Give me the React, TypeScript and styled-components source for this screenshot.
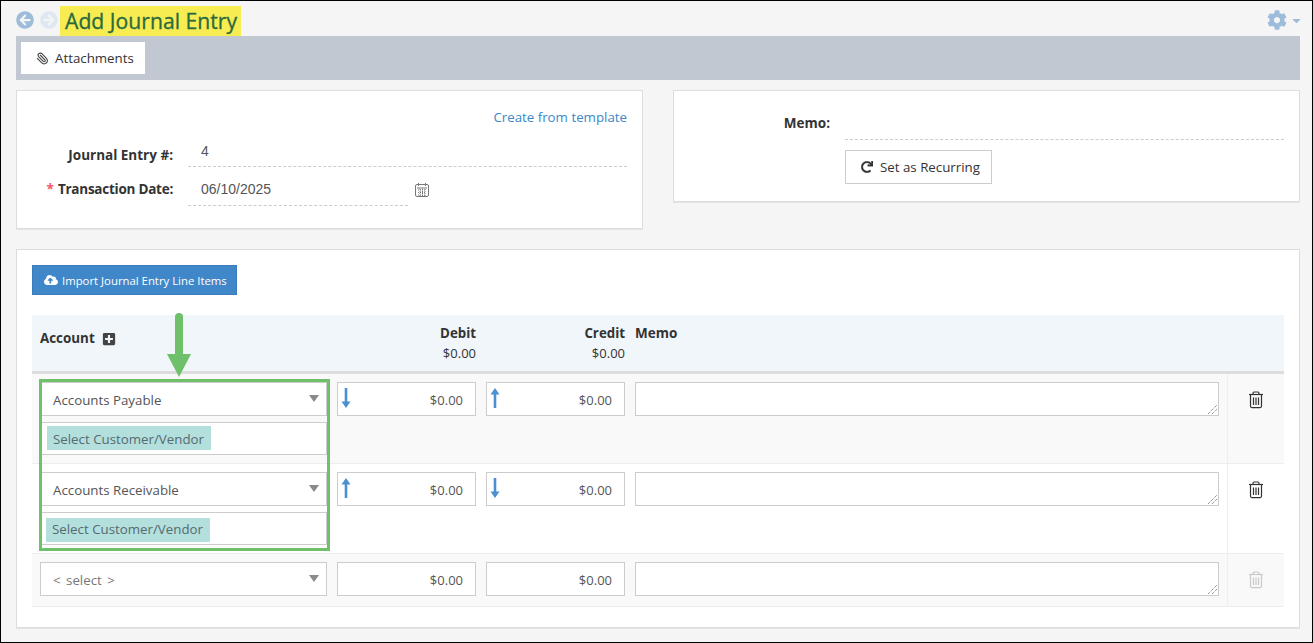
import React from "react";
import styled, { createGlobalStyle } from "styled-components";
import {
  FaArrowCircleLeft,
  FaArrowCircleRight,
  FaCog,
  FaCaretDown,
  FaRedo,
  FaCloudUploadAlt,
  FaPlusSquare,
} from "react-icons/fa";
import { Paperclip } from "lucide-react";

const Global = createGlobalStyle`
  html, body { margin: 0; padding: 0; height: 100%; }
  body { font-family: "Open Sans", "Noto Sans", sans-serif; font-size: 13.3px; color: #333; }
  * { box-sizing: border-box; }
`;

const Page = styled.div`
  position: relative;
  width: 1313px;
  height: 643px;
  background: #f5f5f5;
  border: 1px solid #000;
  padding: 0 12px 14px 15px;
  overflow: hidden;
`;

const Header = styled.header`
  height: 35px;
  display: flex;
  align-items: flex-start;
`;

const NavIcon = styled.span<{ $faded?: boolean }>`
  display: flex;
  width: 18px;
  height: 18px;
  margin: 10px ${(p) => (p.$faded ? 2 : 6)}px 0 0;
  font-size: 18px;
  color: ${(p) => (p.$faded ? "#dfe7f0" : "#9dbbdb")};
`;

const Title = styled.h1`
  margin: 5px 0 0;
  padding: 0 4px 0 5px;
  height: 30px;
  line-height: 29px;
  background: #f7ec52;
  color: #2a6a3e;
  font-size: 21.2px;
  font-weight: 400;
  -webkit-text-stroke: 0.3px #2a6a3e;
`;

const Settings = styled.div`
  margin: 9px -3px 0 auto;
  display: flex;
  align-items: center;
  color: #9dbbdb;
  font-size: 20px;
  gap: 3px;
  height: 20px;
  & > svg:last-child { font-size: 13px; }
`;

const Toolbar = styled.div`
  height: 44px;
  background: #c1c8d2;
  padding: 6px 5px;
  display: flex;
`;

const ToolButton = styled.div`
  width: 124px;
  height: 32px;
  background: #fff;
  display: flex;
  align-items: center;
  padding-left: 15px;
  gap: 6px;
  color: #333;
  & > svg { color: #444; transform: scaleX(-1); }
`;

const CardRow = styled.div`
  display: flex;
  gap: 30px;
  margin-top: 10px;
  align-items: flex-start;
`;

const Card = styled.section<{ $h: number }>`
  width: 627px;
  height: ${(p) => p.$h}px;
  background: #fff;
  border: 1px solid #ddd;
  box-shadow: 0 1px 0 #e4e4e4;
`;

const TemplateLink = styled.div`
  text-align: right;
  color: #3b87c8;
  margin: 17px 15px 0 0;
  line-height: 18px;
`;

const FormRow = styled.div<{ $top?: number; $indent?: number }>`
  display: flex;
  align-items: flex-start;
  margin-top: ${(p) => p.$top ?? 0}px;
  padding-left: ${(p) => p.$indent ?? 0}px;
`;

const Label = styled.label<{ $top: number }>`
  width: 156px;
  margin-right: 1px;
  padding-top: ${(p) => p.$top}px;
  text-align: right;
  font-weight: 700;
  font-size: 13.5px;
  line-height: 18px;
  color: #333;
  flex: none;
`;

const Req = styled.span`
  color: #f4566e;
  font-weight: 700;
  margin-right: 4px;
`;

const TightText = styled.span`
  letter-spacing: -0.25px;
`;

const DashedField = styled.div<{ $w: number; $h: number; $top: number }>`
  width: ${(p) => p.$w}px;
  height: ${(p) => p.$h}px;
  margin-left: 14px;
  border-bottom: 1px dashed #ccc;
  padding: ${(p) => p.$top}px 0 0 13px;
  font-family: "Liberation Sans", Arial, sans-serif;
  font-size: 14px;
  color: #555;
  line-height: 16px;
  flex: none;
`;

const CalendarIcon = styled.svg`
  width: 16px;
  height: 16px;
  margin: 15px 0 0 6px;
  flex: none;
`;

const MemoBlock = styled.div`
  display: flex;
  flex-direction: column;
`;

const MemoField = styled.div`
  width: 439px;
  height: 33px;
  margin-left: 14px;
  border-bottom: 1px dashed #ccc;
`;

const OutlineButton = styled.div`
  margin: 10px 0 0 14px;
  width: 147px;
  height: 34px;
  border: 1px solid #ccc;
  display: flex;
  align-items: center;
  padding-left: 15px;
  gap: 7px;
  color: #333;
  & > svg { font-size: 12px; stroke: currentColor; stroke-width: 14px; }
`;

const MainCard = styled.section`
  margin-top: 20px;
  height: 379px;
  background: #fff;
  border: 1px solid #ddd;
  box-shadow: 0 1px 0 #e4e4e4;
  padding: 15px;
`;

const ImportButton = styled.div`
  width: 205px;
  height: 30px;
  background: #3f87c9;
  border: 1px solid #3a7cb8;
  color: #fff;
  font-size: 11.35px;
  display: flex;
  align-items: center;
  padding-left: 11px;
  gap: 4px;
  & > svg { font-size: 14px; }
`;

const columns = "300px 149px 149px 597px 57px";

const TableHead = styled.div`
  margin-top: 20px;
  display: grid;
  grid-template-columns: ${columns};
  height: 59px;
  background: #f1f6fa;
  border-bottom: 3px solid #ddd;
`;

const HeadAccount = styled.div`
  padding: 14px 0 0 8px;
  font-weight: 700;
  font-size: 13.4px;
  line-height: 18px;
  display: flex;
  align-items: flex-start;
  gap: 7px;
  & > svg { margin-top: 3px; font-size: 14px; color: #444; }
`;

const HeadMoney = styled.div`
  padding: 8px 5px 0 0;
  text-align: right;
  line-height: 20px;
  font-size: 13px;
  & > b { display: block; font-weight: 700; font-size: 13.3px; }
`;

const HeadMemo = styled.div`
  padding: 8px 0 0 5px;
  font-weight: 700;
  font-size: 13.5px;
  line-height: 20px;
`;

const Row = styled.div<{ $alt?: boolean; $h: number }>`
  display: grid;
  grid-template-columns: ${columns};
  height: ${(p) => p.$h}px;
  background: ${(p) => (p.$alt ? "#f9f9f9" : "#fff")};
  border-bottom: 1px solid #eee;
`;

const AccountCell = styled.div`
  padding: 8px 5px 0 9px;
  display: flex;
  flex-direction: column;
  gap: 6px;
`;

const SelectBox = styled.div<{ $plain?: boolean }>`
  position: relative;
  height: 34px;
  background: #fff;
  border: 1px solid #ccc;
  margin-left: ${(p) => (p.$plain ? -1 : 0)}px;
  padding-left: ${(p) => (p.$plain ? 12 : 11)}px;
  line-height: 35px;
  word-spacing: ${(p) => (p.$plain ? 2 : 0)}px;
  color: ${(p) => (p.$plain ? "#777" : "#555")};
  &::after {
    content: "";
    position: absolute;
    right: 7px;
    top: 12px;
    border-left: 5px solid transparent;
    border-right: 5px solid transparent;
    border-top: 7px solid #8a8a8a;
  }
`;

const ChipBox = styled.div<{ $top: number; $left: number }>`
  height: 33px;
  background: #fff;
  border: 1px solid #ccc;
  padding: ${(p) => p.$top}px 0 0 ${(p) => p.$left}px;
`;

const Chip = styled.span<{ $line: number }>`
  display: inline-block;
  height: 24px;
  line-height: ${(p) => p.$line}px;
  padding: 0 7px 0 6px;
  background: #b3dfdd;
  color: #566a70;
`;

const InputCell = styled.div`
  padding: 8px 5px 0;
`;

const MoneyInput = styled.div`
  position: relative;
  height: 34px;
  background: #fff;
  border: 1px solid #ccc;
  text-align: right;
  padding-right: 12px;
  line-height: 34px;
  font-size: 13px;
  color: #555;
`;

const MoneyArrow = styled.svg`
  position: absolute;
  left: 3px;
  top: 5px;
  width: 10px;
  height: 20px;
  fill: #4a90d0;
`;

const MemoInputCell = styled.div`
  padding: 8px 8px 0 5px;
`;

const MemoInput = styled.div`
  position: relative;
  height: 34px;
  background: #fff;
  border: 1px solid #ccc;
`;

const Grip = styled.svg`
  position: absolute;
  right: 1px;
  bottom: 1px;
  width: 9px;
  height: 9px;
`;

const TrashCell = styled.div`
  border-left: 1px solid #eee;
  display: flex;
  justify-content: center;
  padding-top: 17px;
`;

const Highlight = styled.div`
  position: absolute;
  left: 38px;
  top: 378px;
  width: 291px;
  height: 172px;
  border: 3px solid #6fc06b;
  pointer-events: none;
`;

const ArrowOverlay = styled.svg`
  position: absolute;
  left: 166px;
  top: 312px;
  width: 24px;
  height: 65px;
`;

const Trash = ({ color }: { color: string }) => (
  <svg width="16" height="18" viewBox="0 0 16 18" fill="none" stroke={color} strokeWidth="1.2">
    <path d="M1 3.500h14" />
    <path d="M5 3.500V2.200C5 1.400 5.600 1 6.200 1h3.600c.6 0 1.200.4 1.200 1.200v1.300" />
    <path d="M2.500 3.500v11.600c0 .9.6 1.500 1.400 1.500h8.200c.8 0 1.400-.6 1.400-1.500V3.500" />
    <path d="M5.500 6.500v7.500M8 6.500v7.500M10.500 6.500v7.500" />
  </svg>
);

const ResizeGrip = () => (
  <Grip viewBox="0 0 9 9">
    <path d="M0 9L9 0M4 9L9 4" stroke="#666" strokeWidth="1" strokeDasharray="1 1" fill="none" />
  </Grip>
);

const Money = ({ dir }: { dir?: "up" | "down" }) => (
  <MoneyInput>
    {dir === "up" && (
      <MoneyArrow viewBox="0 0 10 20">
        <path d="M5 0L9.500 6.500H6.300V20H3.700V6.500H.5z" />
      </MoneyArrow>
    )}
    {dir === "down" && (
      <MoneyArrow viewBox="0 0 10 20">
        <path d="M5 20L9.500 13.500H6.300V0H3.700V13.500H.5z" />
      </MoneyArrow>
    )}
    $0.00
  </MoneyInput>
);

type LineRowProps = {
  account: string;
  first: "up" | "down";
  second: "up" | "down";
  alt?: boolean;
  chipTop: number;
  chipLeft: number;
  chipLine: number;
};

const LineRow = ({ account, first, second, alt, chipTop, chipLeft, chipLine }: LineRowProps) => (
  <Row $alt={alt} $h={90}>
    <AccountCell>
      <SelectBox>{account}</SelectBox>
      <ChipBox $top={chipTop} $left={chipLeft}>
        <Chip $line={chipLine}>Select Customer/Vendor</Chip>
      </ChipBox>
    </AccountCell>
    <InputCell>
      <Money dir={first} />
    </InputCell>
    <InputCell>
      <Money dir={second} />
    </InputCell>
    <MemoInputCell>
      <MemoInput>
        <ResizeGrip />
      </MemoInput>
    </MemoInputCell>
    <TrashCell>
      <Trash color="#333" />
    </TrashCell>
  </Row>
);

export default function App() {
  return (
    <Page>
      <Global />
      <Header>
        <NavIcon>
          <FaArrowCircleLeft />
        </NavIcon>
        <NavIcon $faded>
          <FaArrowCircleRight />
        </NavIcon>
        <Title>Add Journal Entry</Title>
        <Settings>
          <FaCog />
          <FaCaretDown />
        </Settings>
      </Header>
      <Toolbar>
        <ToolButton>
          <Paperclip size={13} strokeWidth={2} />
          Attachments
        </ToolButton>
      </Toolbar>
      <CardRow>
        <Card $h={139}>
          <TemplateLink>Create from template</TemplateLink>
          <FormRow $top={9}>
            <Label $top={11}>Journal Entry #:</Label>
            <DashedField $w={439} $h={32} $top={8}>4</DashedField>
          </FormRow>
          <FormRow>
            <Label $top={13}>
              <Req>*</Req>
              <TightText>Transaction Date:</TightText>
            </Label>
            <DashedField $w={220} $h={39} $top={14}>06/10/2025</DashedField>
            <CalendarIcon viewBox="0 0 16 16" fill="none" stroke="#777" strokeWidth="1">
              <rect x="1.500" y="2.500" width="13" height="12" rx="1.500" />
              <path d="M4.500 1v3M11.500 1v3" />
              <path d="M3 6h10" />
              <path d="M4 8h8M4 10.500h8M4 13h8M6 7v7M8.500 7v7M11 7v7" strokeDasharray="1 1" />
            </CalendarIcon>
          </FormRow>
        </Card>
        <Card $h={112}>
          <MemoBlock>
            <FormRow $top={16}>
              <Label $top={7}>Memo:</Label>
              <MemoField />
            </FormRow>
            <FormRow $indent={157}>
              <OutlineButton>
                <FaRedo />
                Set as Recurring
              </OutlineButton>
            </FormRow>
          </MemoBlock>
        </Card>
      </CardRow>
      <MainCard>
        <ImportButton>
          <FaCloudUploadAlt />
          Import Journal Entry Line Items
        </ImportButton>
        <TableHead>
          <HeadAccount>
            Account
            <FaPlusSquare />
          </HeadAccount>
          <HeadMoney>
            <b>Debit</b>$0.00
          </HeadMoney>
          <HeadMoney>
            <b>Credit</b>$0.00
          </HeadMoney>
          <HeadMemo>Memo</HeadMemo>
          <div />
        </TableHead>
        <LineRow account="Accounts Payable" first="down" second="up" alt chipTop={3} chipLeft={5} chipLine={26} />
        <LineRow account="Accounts Receivable" first="up" second="down" chipTop={5} chipLeft={4} chipLine={23} />
        <Row $alt $h={53}>
          <AccountCell>
            <SelectBox $plain>&lt; select &gt;</SelectBox>
          </AccountCell>
          <InputCell>
            <Money />
          </InputCell>
          <InputCell>
            <Money />
          </InputCell>
          <MemoInputCell>
            <MemoInput>
              <ResizeGrip />
            </MemoInput>
          </MemoInputCell>
          <TrashCell>
            <Trash color="#c9c9c9" />
          </TrashCell>
        </Row>
      </MainCard>
      <Highlight />
      <ArrowOverlay viewBox="0 0 24 65">
        <path d="M12 4v40" stroke="#6fc06b" strokeWidth="8" strokeLinecap="round" />
        <path d="M0 41h24L12 64z" fill="#6fc06b" />
      </ArrowOverlay>
    </Page>
  );
}
